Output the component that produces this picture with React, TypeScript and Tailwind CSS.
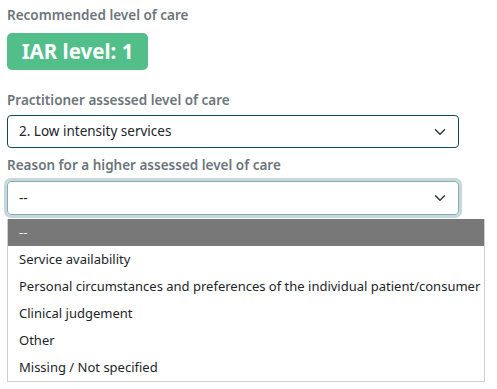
import React from "react";

const options = [
  "--",
  "Service availability",
  "Personal circumstances and preferences of the individual patient/consumer",
  "Clinical judgement",
  "Other",
  "Missing / Not specified",
];

function Chevron() {
  return (
    <svg width="12" height="12" viewBox="0 0 16 16" fill="none" className="text-[#343a40]">
      <path d="M2 5l6 6 6-6" stroke="currentColor" strokeWidth="2" strokeLinecap="round" strokeLinejoin="round" />
    </svg>
  );
}

export default function App() {
  return (
    <div className="w-[497px] h-[389px] bg-white text-[13.5px] font-['Noto_Sans',sans-serif] text-[#212529] pl-[7px] pt-[6px]">
      <div className="text-[#6c757d] font-semibold leading-[18px]">Recommended level of care</div>
      <div className="mt-[9px] w-[141px] h-[37px] rounded-[5px] bg-[#52bf8b] text-white font-bold text-[20.5px] flex items-center justify-center">
        IAR level: 1
      </div>

      <div className="mt-[21px] text-[#6c757d] font-semibold leading-[18px]">Practitioner assessed level of care</div>
      <div className="mt-[6px] w-[452px] h-[33px] border border-[#0b4f55] rounded-[4px] flex items-center justify-between pl-[11px] pr-[12px]">
        <span>2. Low intensity services</span>
        <Chevron />
      </div>

      <div className="mt-[8px] text-[#6c757d] font-semibold leading-[18px]">Reason for a higher assessed level of care</div>
      <div className="mt-[7px] w-[452px] h-[34px] border border-[#86adb4] rounded-[4px] shadow-[0_0_0_3px_#c7d8dc] flex items-center justify-between pl-[11px] pr-[12px]">
        <span>--</span>
        <Chevron />
      </div>

      <div className="mt-[4px] w-[478px] border border-[#cfcfcf] border-t-0 text-[13px]">
        {options.map((o, i) => (
          <div
            key={o}
            className={`h-[27px] flex items-center pl-[11px] whitespace-nowrap ${i === 0 ? "bg-[#787878] text-white" : "text-[#212529]"}`}
          >
            {o}
          </div>
        ))}
      </div>
    </div>
  );
}
